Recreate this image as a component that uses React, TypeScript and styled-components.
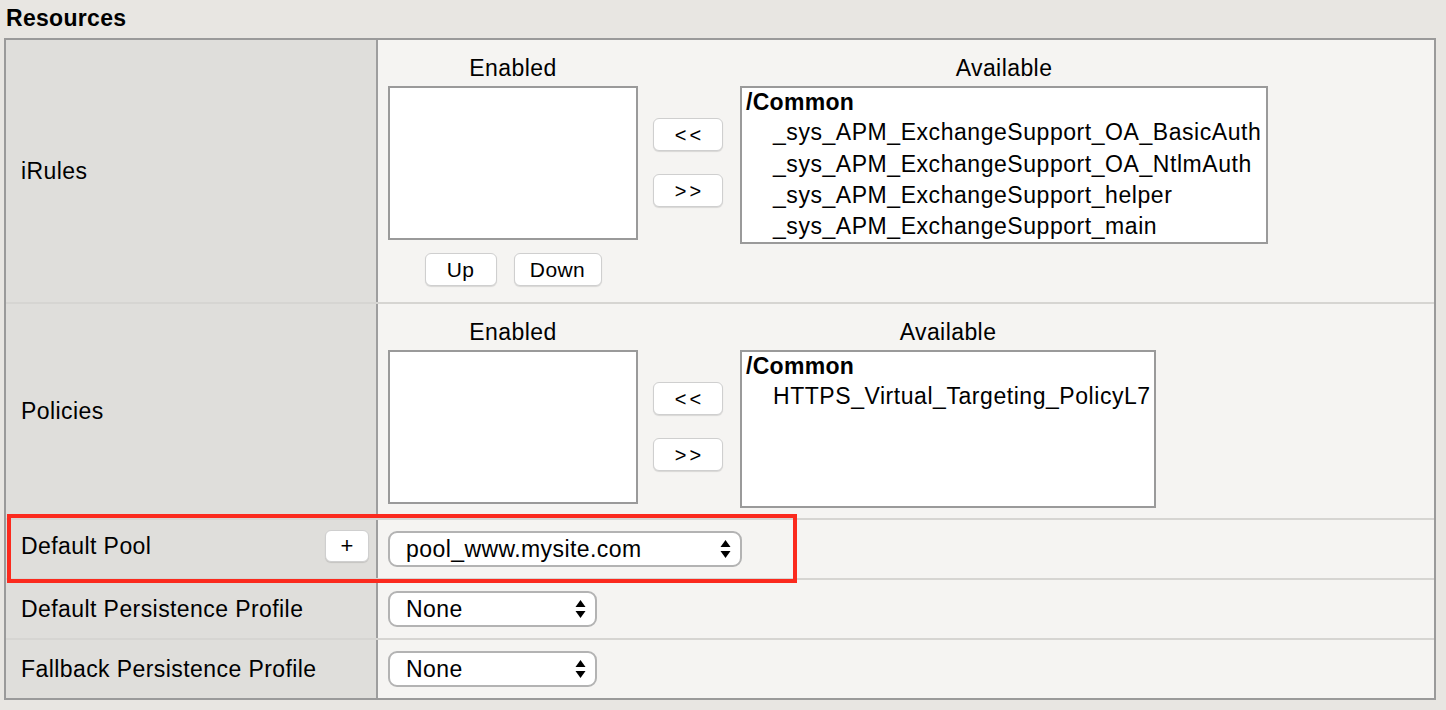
import React from "react";
import styled, { createGlobalStyle } from "styled-components";

const Global = createGlobalStyle`
  html, body { margin: 0; padding: 0; }
  body {
    background: #e8e6e2;
    font-family: "Liberation Sans", Arial, Helvetica, sans-serif;
    color: #000;
    width: 1446px;
    height: 710px;
    overflow: hidden;
  }
`;

const Page = styled.div`
  position: relative;
  width: 1446px;
  height: 710px;
`;

const Title = styled.h2`
  margin: 0;
  height: 38px;
  line-height: 37px;
  padding-left: 6px;
  font-size: 23px;
  font-weight: bold;
  letter-spacing: 0.3px;
`;

const Table = styled.div`
  margin-left: 4px;
  width: 1432px;
  box-sizing: border-box;
  border: 2px solid #9a9a9a;
  display: flex;
  flex-direction: column;
`;

const Row = styled.div<{ $h: number; $last?: boolean }>`
  display: flex;
  height: ${(p) => p.$h}px;
  box-sizing: content-box;
  border-bottom: ${(p) => (p.$last ? "none" : "2px solid #d6d5d2")};
`;

const LabelCell = styled.div<{ $lift?: number }>`
  width: 372px;
  flex: none;
  background: #dfdedb;
  border-right: 2px solid #9e9e9e;
  display: flex;
  align-items: center;
  justify-content: space-between;
  padding: 0 7px ${(p) => p.$lift ?? 0}px 15px;
  box-sizing: border-box;
  font-size: 23px;
  letter-spacing: 0.42px;
`;

const ValueCell = styled.div`
  flex: 1;
  background: #f5f4f2;
  display: flex;
  align-items: center;
  padding-left: 10px;
`;

const DualCell = styled.div`
  flex: 1;
  background: #f5f4f2;
  display: flex;
  align-items: flex-start;
  padding: 14px 0 0 10px;
`;

const Column = styled.div<{ $gap?: number }>`
  display: flex;
  flex-direction: column;
  align-items: center;
  margin-left: ${(p) => p.$gap ?? 0}px;
`;

const ColHeader = styled.div`
  height: 32px;
  line-height: 28px;
  font-size: 23px;
  letter-spacing: 0.42px;
  text-align: center;
`;

const ListBox = styled.div<{ $w: number; $h: number }>`
  width: ${(p) => p.$w}px;
  height: ${(p) => p.$h}px;
  box-sizing: border-box;
  background: #fff;
  border: 2px solid #9a9a9a;
  padding: 0 0 0 4px;
  font-size: 23px;
  letter-spacing: 0.55px;
  line-height: 31.3px;
  overflow: hidden;
  white-space: nowrap;
`;

const Group = styled.div`
  font-weight: bold;
  letter-spacing: 0.3px;
  margin-top: -1px;
  margin-bottom: -1px;
`;

const Option = styled.div`
  padding-left: 27px;
`;

const MoveStack = styled.div`
  display: flex;
  flex-direction: column;
  gap: 23px;
  margin-top: 64px;
`;

const Btn = styled.button<{ $w: number }>`
  width: ${(p) => p.$w}px;
  height: 33px;
  background: #fff;
  border: 1px solid #cfcfcf;
  border-radius: 6px;
  box-shadow: 0 1px 1px rgba(0, 0, 0, 0.12);
  font-family: "Liberation Sans", Arial, sans-serif;
  font-size: 21px;
  letter-spacing: 0.4px;
  color: #000;
  padding: 0;
  display: flex;
  align-items: center;
  justify-content: center;
`;

const ArrowTxt = styled.span`
  font-size: 20px;
  letter-spacing: 3px;
  margin-right: -3px;
  margin-top: 2px;
`;

const OrderRow = styled.div`
  display: flex;
  gap: 17px;
  margin-top: 13px;
`;

const PlusBtn = styled(Btn)`
  height: 32px;
  font-size: 22px;
  font-weight: normal;
`;

const Select = styled.div<{ $w: number }>`
  width: ${(p) => p.$w}px;
  height: 36px;
  box-sizing: border-box;
  background: #fff;
  border: 2px solid #b3b3b3;
  border-radius: 9px;
  display: flex;
  align-items: center;
  justify-content: space-between;
  padding: 0 9px 0 16px;
  font-size: 23px;
  letter-spacing: 0.42px;
`;

const Highlight = styled.div`
  position: absolute;
  left: 7px;
  top: 514px;
  width: 790px;
  height: 69px;
  box-sizing: border-box;
  border: 4px solid #fb2a1e;
  pointer-events: none;
`;

const Updown = () => (
  <svg width="11" height="20" viewBox="0 0 11 20">
    <polygon points="0.5,8 5.5,1 10.5,8" fill="#000" />
    <polygon points="0.5,12 10.5,12 5.5,19" fill="#000" />
  </svg>
);

const Dual = ({
  available,
  availW,
  withOrder,
}: {
  available: string[];
  availW: number;
  withOrder?: boolean;
}) => (
  <DualCell>
    <Column>
      <ColHeader>Enabled</ColHeader>
      <ListBox $w={250} $h={154} />
      {withOrder && (
        <OrderRow>
          <Btn $w={72}>Up</Btn>
          <Btn $w={88}>Down</Btn>
        </OrderRow>
      )}
    </Column>
    <Column $gap={15}>
      <MoveStack>
        <Btn $w={70}>
          <ArrowTxt>&lt;&lt;</ArrowTxt>
        </Btn>
        <Btn $w={70}>
          <ArrowTxt>&gt;&gt;</ArrowTxt>
        </Btn>
      </MoveStack>
    </Column>
    <Column $gap={17}>
      <ColHeader>Available</ColHeader>
      <ListBox $w={availW} $h={158}>
        <Group>/Common</Group>
        {available.map((a) => (
          <Option key={a}>{a}</Option>
        ))}
      </ListBox>
    </Column>
  </DualCell>
);

export default function App() {
  return (
    <Page>
      <Global />
      <Title>Resources</Title>
      <Table>
        <Row $h={262}>
          <LabelCell>iRules</LabelCell>
          <Dual
            withOrder
            availW={528}
            available={[
              "_sys_APM_ExchangeSupport_OA_BasicAuth",
              "_sys_APM_ExchangeSupport_OA_NtlmAuth",
              "_sys_APM_ExchangeSupport_helper",
              "_sys_APM_ExchangeSupport_main",
            ]}
          />
        </Row>
        <Row $h={214}>
          <LabelCell>Policies</LabelCell>
          <Dual availW={416} available={["HTTPS_Virtual_Targeting_PolicyL7"]} />
        </Row>
        <Row $h={58}>
          <LabelCell $lift={6}>
            <span>Default Pool</span>
            <PlusBtn $w={44}>+</PlusBtn>
          </LabelCell>
          <ValueCell>
            <Select $w={354}>
              <span>pool_www.mysite.com</span>
              <Updown />
            </Select>
          </ValueCell>
        </Row>
        <Row $h={58}>
          <LabelCell>Default Persistence Profile</LabelCell>
          <ValueCell>
            <Select $w={209}>
              <span>None</span>
              <Updown />
            </Select>
          </ValueCell>
        </Row>
        <Row $h={58} $last>
          <LabelCell>Fallback Persistence Profile</LabelCell>
          <ValueCell>
            <Select $w={209}>
              <span>None</span>
              <Updown />
            </Select>
          </ValueCell>
        </Row>
      </Table>
      <Highlight />
    </Page>
  );
}
